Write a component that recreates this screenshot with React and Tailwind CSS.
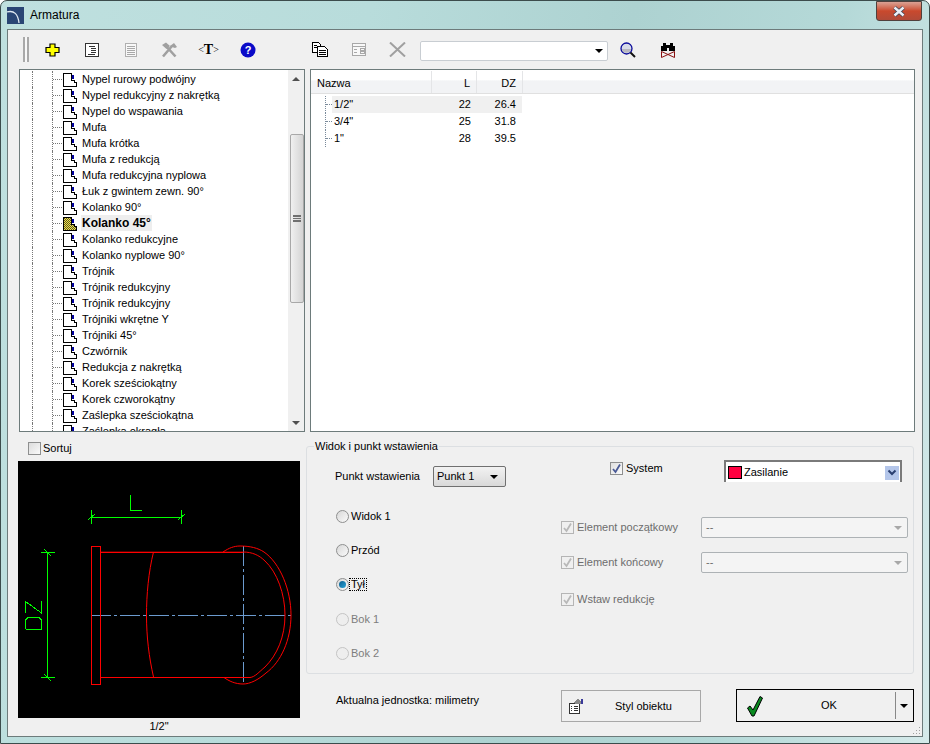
const treeItems = [
  "Nypel rurowy podwójny",
  "Nypel redukcyjny z nakrętką",
  "Nypel do wspawania",
  "Mufa",
  "Mufa krótka",
  "Mufa z redukcją",
  "Mufa redukcyjna nyplowa",
  "Łuk z gwintem zewn. 90°",
  "Kolanko 90°",
  "Kolanko 45°",
  "Kolanko redukcyjne",
  "Kolanko nyplowe 90°",
  "Trójnik",
  "Trójnik redukcyjny",
  "Trójnik redukcyjny",
  "Trójniki wkrętne Y",
  "Trójniki 45°",
  "Czwórnik",
  "Redukcja z nakrętką",
  "Korek sześciokątny",
  "Korek czworokątny",
  "Zaślepka sześciokątna",
  "Zaślepka okrągła",
];

const sizes = [
  { name: '1/2"', l: 22, dz: "26.4" },
  { name: '3/4"', l: 25, dz: "31.8" },
  { name: '1"', l: 28, dz: "39.5" },
];

function DocIcon({ active }) {
  return (
    <svg width="16" height="16" viewBox="0 0 16 16" shapeRendering="crispEdges" className="shrink-0 translate-y-[1px]">
      <defs>
        <pattern id="checker" width="2" height="2" patternUnits="userSpaceOnUse">
          <rect width="2" height="2" fill="#f4e04a" />
          <rect width="1" height="1" fill="#5a5a20" />
          <rect x="1" y="1" width="1" height="1" fill="#5a5a20" />
        </pattern>
      </defs>
      <path d="M1.5 1.5H9.5V8.5H12.5V10.5H14.5V14.5H1.5Z" fill={active ? "url(#checker)" : "#fff"} stroke="#000" />
      <rect x="10" y="3" width="2" height="4" fill="#0000a0" />
    </svg>
  );
}

function TreeRow({ label, active }) {
  return (
    <div className="flex h-4 items-center">
      <span className="ml-[12px] h-full w-[20px] shrink-0 border-l border-dotted border-[#777]" />
      <span className="h-full w-[0px] shrink-0 border-l border-dotted border-[#777]" />
      <span className="w-[9px] shrink-0 border-t border-dotted border-[#777]" />
      <DocIcon active={active} />
      {active ? (
        <span className="ml-[3px] bg-[#eeeeee] px-[1px] py-[2px] text-[12px] font-bold text-black">{label}</span>
      ) : (
        <span className="ml-[4px] text-black">{label}</span>
      )}
    </div>
  );
}

function ToolBtn({ children }) {
  return <div className="flex h-[39px] w-[39px] shrink-0 items-center justify-center">{children}</div>;
}

function Check({ disabled }) {
  return (
    <span className={`flex h-[13px] w-[13px] shrink-0 items-center justify-center border ${disabled ? "border-[#b5b5b5] bg-[#f0f0f0]" : "border-[#8e8f8f] bg-gradient-to-br from-[#e0e0e0] to-[#fafafa]"}`}>
      <svg width="11" height="11" viewBox="0 0 11 11">
        <path d="M2 6L4.5 9L9 1.5" fill="none" stroke={disabled ? "#b8b8b8" : "#4a5a96"} strokeWidth="1.8" />
      </svg>
    </span>
  );
}

function Radio({ label, checked, disabled }) {
  return (
    <div className="ml-[1px] flex h-[16px] items-center">
      <span className={`flex h-[13px] w-[13px] items-center justify-center rounded-full border ${disabled ? "border-[#c4c4c4] bg-[#eeeeee]" : "border-[#8e8f8f] bg-gradient-to-br from-[#d8d8d8] to-[#fafafa]"}`}>
        {checked && <span className="h-[7px] w-[7px] rounded-full bg-gradient-to-br from-[#0b5f8f] to-[#29a3d8]" />}
      </span>
      <span className={`ml-[1px] px-[1px] ${checked ? "outline-1 outline-dotted outline-black" : ""} ${disabled ? "text-[#7d7d7d]" : "text-black"}`}>{label}</span>
    </div>
  );
}

function DisabledCombo() {
  return (
    <div className="flex h-[21px] w-[207px] items-center justify-between rounded-[2px] border border-[#adb2b5] bg-[#f4f4f4] pl-[4px] pr-[4px] text-[#6d6d6d]">
      <span>--</span>
      <span className="mr-[1px] h-0 w-0 border-x-[4px] border-t-[4px] border-x-transparent border-t-[#a8a8a8]" />
    </div>
  );
}

function Drawing() {
  const blue = "#6c9bcf";
  return (
    <svg viewBox="18 461 282 257" className="block h-[257px] w-[282px] bg-black" shapeRendering="crispEdges">
      {/* dimensions */}
      <g stroke="#00ff00" fill="none">
        <path d="M91.5 517.5H181.5M91.5 510V524M181.5 510V524M88 520L95 514M178 520L185 514" />
        <path d="M130.5 495V510.5H142" />
        <path d="M47.5 552V677.5M41 552.5H55M41 677.5H55M44 549L51 556M44 674L51 681" />
        <path d="M25.5 613V601.5L41.5 613V601" />
        <path d="M25.5 629.5H41.5M25.5 629V620L28 617.5H39L41.5 620V629" />
      </g>
      {/* center lines */}
      <g stroke={blue} fill="none">
        <path d="M91 615.5H291" strokeDasharray="20 3 3 3" />
        <path d="M243.5 546V684" strokeDasharray="20 3 3 3" />
      </g>
      {/* fitting */}
      <g stroke="#ff0000" fill="none">
        <rect x="91.5" y="546.5" width="9" height="138" />
        <path d="M100 552H243M100 677.5H250" />
        <g shapeRendering="auto">
          <path d="M100 552.2H243" />
          <path d="M153.5 552C148.5 572 146.5 595 146.5 615C146.5 637 149 657 153.5 677" />
          <path d="M223 552C229 548 234 546 240 546C250 546 258 548 264 552C280 563 291 590 291 615C291 640 281 662 266 673C258 680 250 684 243 684C235 684 229 681 224 677.5" />
          <path d="M243 552C252 552 259 555 265 561C277 572 285 594 285 615C285 637 277 655 265 667C259 672 255 677 250 677.5" />
        </g>
      </g>
    </svg>
  );
}

export default function App() {
  return (
    <div
      className="relative flex h-[744px] w-[930px] flex-col overflow-hidden rounded-t-[7px] border border-[#3c4c4c] bg-[linear-gradient(100deg,#bfe0df_0%,#b8dcdb_35%,#add2d1_60%,#b5d9d8_80%,#d5eaea_100%)] text-[11px] leading-none text-black"
      style={{ fontFamily: '"Liberation Sans", Arial, sans-serif' }}
    >
      <div className="flex h-[28px] shrink-0 items-center">
        <div className="ml-[6px] h-[17px] w-[17px] shrink-0 bg-[#1e3a68]">
          <svg width="17" height="17" viewBox="0 0 17 17">
            <rect width="17" height="17" fill="#2a4574" />
            <path d="M0 5C7 3 11 7 12 16" fill="none" stroke="#dfe7f0" strokeWidth="1.3" />
          </svg>
        </div>
        <span className="ml-[6px] text-[12px] text-black">Armatura</span>
        <div className="ml-auto mr-[7px] flex h-[20px] w-[46px] -translate-y-[4px] items-center justify-center rounded-b-[3px] border border-[#50403c] bg-gradient-to-b from-[#d9a294] via-[#c9492d] to-[#b04a38]">
          <svg width="14" height="11" viewBox="0 0 14 11">
            <path d="M2.5 1.5L11.5 9.5M11.5 1.5L2.5 9.5" stroke="#3c4658" strokeWidth="4" />
            <path d="M2.5 1.5L11.5 9.5M11.5 1.5L2.5 9.5" stroke="#ecf0f6" strokeWidth="2.4" />
          </svg>
        </div>
      </div>

      <div className="mx-[6px] flex h-[709px] flex-col border border-[#6d7b7b] bg-[#f0f0f0]">
        {/* toolbar */}
        <div className="flex h-[39px] shrink-0 items-center">
          <span className="ml-[15px] h-[25px] w-[6px] border-x-2 border-[#a9a9a9] bg-[#f8f8f8]" />
          <div className="ml-[4px] flex">
            <ToolBtn>
              <svg width="15" height="14" viewBox="0 0 15 14">
                <path d="M5 1H10V4.5H14V9.5H10V13H5V9.5H1V4.5H5Z" fill="#ffff00" stroke="#000" strokeWidth="1.2" />
              </svg>
            </ToolBtn>
            <ToolBtn>
              <svg width="14" height="14" viewBox="0 0 14 14" shapeRendering="crispEdges">
                <rect x="0.5" y="0.5" width="13" height="13" fill="#fff" stroke="#333" />
                <path d="M4 3.5H10M6 5.5H11M6 7.5H11M6 9.5H11M3 11.5H10" stroke="#333" />
              </svg>
            </ToolBtn>
            <ToolBtn>
              <svg width="12" height="14" viewBox="0 0 12 14" shapeRendering="crispEdges">
                <rect x="0.5" y="0.5" width="11" height="13" fill="#f8f8f8" stroke="#b0b0b0" />
                <path d="M2 3.5H10M2 5.5H10M2 7.5H10M2 9.5H10M2 11.5H10" stroke="#a8a8a8" />
              </svg>
            </ToolBtn>
            <ToolBtn>
              <svg width="17" height="16" viewBox="0 0 17 16">
                <path d="M2 14.5L11 4M14.5 14.5L5 4" stroke="#a0a0a0" strokeWidth="2.6" />
                <path d="M1 3L5 0.5L9 4L5.5 7ZM9 4L13 1L16 5L14 6L11 5Z" fill="#a0a0a0" />
              </svg>
            </ToolBtn>
            <ToolBtn>
              <span className="flex items-center text-black" style={{ fontFamily: '"Liberation Serif", serif' }}>
                <span className="text-[10px]">&lt;</span>
                <span className="text-[14px] font-bold">T</span>
                <span className="text-[10px]">&gt;</span>
              </span>
            </ToolBtn>
            <ToolBtn>
              <svg width="16" height="16" viewBox="0 0 16 16">
                <circle cx="8" cy="8" r="7.5" fill="#0a0ac8" />
                <text x="8" y="12" textAnchor="middle" fontSize="11" fontWeight="700" fill="#fff" fontFamily="Liberation Sans">?</text>
              </svg>
            </ToolBtn>
          </div>
          <div className="ml-[33px] flex">
            <ToolBtn>
              <svg width="16" height="15" viewBox="0 0 16 15" shapeRendering="crispEdges">
                <path d="M0.5 0.5H6.5L8.5 2.5V10.5H0.5Z" fill="#fff" stroke="#000" />
                <path d="M5.5 4.5H12.5L15.5 7.5V14.5H5.5Z" fill="#fff" stroke="#000" />
                <path d="M7 8.5H14M7 10.5H14M7 12.5H14M2 3.5H5M2 5.5H5" stroke="#000" />
              </svg>
            </ToolBtn>
            <ToolBtn>
              <svg width="14" height="13" viewBox="0 0 14 13" shapeRendering="crispEdges">
                <rect x="0.5" y="0.5" width="13" height="12" fill="#f8f8f8" stroke="#a8a8a8" />
                <path d="M1 3.5H13M2 6.5H5M2 9.5H5M8 5.5H12V7.5H8ZM8 8.5H12V10.5H8Z" fill="none" stroke="#a8a8a8" />
              </svg>
            </ToolBtn>
            <ToolBtn>
              <svg width="17" height="15" viewBox="0 0 17 15">
                <path d="M1 0.5L16 14.5M16 0.5L1 14.5" stroke="#a0a0a0" strokeWidth="2" />
              </svg>
            </ToolBtn>
          </div>
          <div className="ml-[3px] mt-[2px] flex h-[20px] w-[188px] items-center justify-end rounded-[2px] border border-[#c8cdd2] bg-white pr-[4px]">
            <span className="h-0 w-0 border-x-[4px] border-t-[4px] border-x-transparent border-t-black" />
          </div>
          <div className="ml-[12px] flex w-[16px] justify-center">
            <svg width="16" height="16" viewBox="0 0 16 16">
              <circle cx="6.5" cy="6.5" r="5.5" fill="#d8dce8" stroke="#0a0a9a" strokeWidth="1.3" />
              <path d="M2 7H11V8.5C9 11.5 4 11.5 2 8.5Z" fill="#b8b8c0" />
              <path d="M10.5 10.5L15 15" stroke="#111" strokeWidth="2" />
            </svg>
          </div>
          <div className="ml-[24px] flex w-[16px] justify-center">
            <svg width="16" height="16" viewBox="0 0 16 16" shapeRendering="crispEdges">
              <path d="M3 1H6V3H10V1H13V4H15V9H9V6H7V9H1V4H3Z" fill="#000" />
              <path d="M1.5 9.5L14.5 15.5M14.5 9.5L1.5 15.5M1.5 9.5V15.5M14.5 9.5V15.5" fill="none" stroke="#8a1010" shapeRendering="auto" />
            </svg>
          </div>
        </div>

        {/* tree and list */}
        <div className="flex h-[363px] shrink-0">
          <div className="ml-[11px] flex w-[286px] shrink-0 border border-[#6d7b7b] bg-white">
            <div className="h-full flex-1 overflow-hidden pt-[1px]">
              {treeItems.map((item, i) => (
                <TreeRow key={i} label={item} active={item === "Kolanko 45°"} />
              ))}
            </div>
            <div className="flex w-[16px] shrink-0 flex-col items-center bg-[#f0f0f0]">
              <div className="flex h-[17px] w-full items-center justify-center">
                <span className="h-0 w-0 border-x-[4px] border-b-[4px] border-x-transparent border-b-[#505050]" />
              </div>
              <div className="mt-[47px] ml-[1px] flex h-[169px] w-[14px] items-center justify-center rounded-[2px] border border-[#a8a8a8] bg-gradient-to-r from-[#f0f0f0] to-[#d4d4d4]">
                <span className="h-[7px] w-[8px] border-y border-[#707070] bg-[linear-gradient(#707070_1px,transparent_1px)] bg-[length:100%_2px]" />
              </div>
              <div className="mt-auto flex h-[17px] w-full items-center justify-center">
                <span className="h-0 w-0 border-x-[4px] border-t-[4px] border-x-transparent border-t-[#505050]" />
              </div>
            </div>
          </div>

          <div className="ml-[5px] w-[605px] shrink-0 border border-[#6d7b7b] bg-white pt-[1px]">
            <div className="flex h-[23px] border-b border-[#e0e0e0] bg-[linear-gradient(#ffffff_40%,#f2f3f5_45%)] pl-[1px]">
              <div className="flex w-[120px] items-center border-r border-[#e4e5e7] pl-[5px] pt-[2px]">Nazwa</div>
              <div className="flex w-[45px] items-center justify-end border-r border-[#e4e5e7] pr-[6px] pt-[2px]">L</div>
              <div className="flex w-[46px] items-center justify-end border-r border-[#e4e5e7] pr-[6px] pt-[2px]">DZ</div>
            </div>
            <div className="pt-[2px]">
              {sizes.map((s, i) => (
                <div key={s.name} className="flex h-[17px] items-center">
                  <span className={`ml-[14px] h-full w-[1px] shrink-0 border-l border-dotted border-[#7a8a9a] ${i === 2 ? "h-1/2 self-start" : ""}`} />
                  <span className="w-[6px] shrink-0 border-t border-dotted border-[#7a8a9a]" />
                  <div className={`flex h-full w-[190px] items-center ${i === 0 ? "bg-[#f0f0f0]" : ""}`}>
                    <span className="w-[98px] pl-[2px]">{s.name}</span>
                    <span className="w-[45px] pr-[4px] text-right">{s.l}</span>
                    <span className="w-[47px] pr-[6px] text-right">{s.dz}</span>
                  </div>
                </div>
              ))}
            </div>
          </div>
        </div>

        {/* lower part */}
        <div className="flex min-h-0 flex-1">
          <div className="ml-[10px] flex w-[282px] shrink-0 flex-col">
            <div className="ml-[10px] mt-[10px] flex h-[13px] items-center">
              <span className="h-[13px] w-[13px] border border-[#8e8f8f] bg-gradient-to-br from-[#dcdcdc] to-[#fafafa]" />
              <span className="ml-[1px] pl-[1px]">Sortuj</span>
            </div>
            <div className="mt-[6px]">
              <Drawing />
            </div>
            <div className="mt-[3px] text-center">1/2"</div>
          </div>

          <div className="ml-[6px] flex w-[608px] shrink-0 flex-col">
            <div className="relative mt-[14px] flex h-[228px] rounded-[3px] border border-[#dcdfe2]">
              <span className="absolute -top-[6px] left-[7px] bg-[#f0f0f0] px-[1px]">Widok i punkt wstawienia</span>
              <div className="w-[254px] shrink-0 pl-[28px]">
                <div className="mt-[19px] flex items-center">
                  <span className="w-[98px]">Punkt wstawienia</span>
                  <div className="flex h-[21px] w-[73px] items-center justify-between rounded-[2px] border border-[#707070] bg-gradient-to-b from-[#f2f2f2] to-[#d9d9d9] pl-[3px] pr-[7px]">
                    <span>Punkt 1</span>
                    <span className="h-0 w-0 border-x-[4px] border-t-[4px] border-x-transparent border-t-black" />
                  </div>
                </div>
                <div className="mt-[21px] flex flex-col gap-[18px]">
                  <Radio label="Widok 1" />
                  <Radio label="Przód" />
                  <Radio label="Tył" checked />
                  <div className="mt-[1px]">
                    <Radio label="Bok 1" disabled />
                  </div>
                  <Radio label="Bok 2" disabled />
                </div>
              </div>
              <div className="flex-1">
                <div className="mt-[15px] flex items-start">
                  <div className="ml-[49px] flex w-[114px] items-center">
                    <Check />
                    <span className="ml-[2px] pl-[1px]">System</span>
                  </div>
                  <div className="-mt-[2px] flex h-[22px] w-[178px] items-center border-2 border-b-0 border-[#7a7a7a] bg-white pl-[2px] pr-[1px] pt-[1px]">
                    <span className="h-[13px] w-[14px] border border-black bg-[#ff0040]" />
                    <span className="ml-[2px]">Zasilanie</span>
                    <span className="ml-auto flex h-[14px] w-[14px] items-center justify-center bg-[#b4c6ea]">
                      <svg width="10" height="8" viewBox="0 0 10 8">
                        <path d="M1.5 1.5L5 5L8.5 1.5" fill="none" stroke="#2a3f70" strokeWidth="2" />
                      </svg>
                    </span>
                  </div>
                </div>
                <div className="mt-[35px] flex items-center">
                  <Check disabled />
                  <span className="ml-[2px] w-[125px] pl-[1px] text-[#6d6d6d]">Element początkowy</span>
                  <DisabledCombo />
                </div>
                <div className="mt-[14px] flex items-center">
                  <Check disabled />
                  <span className="ml-[2px] w-[125px] pl-[1px] text-[#6d6d6d]">Element końcowy</span>
                  <DisabledCombo />
                </div>
                <div className="mt-[20px] flex items-center">
                  <Check disabled />
                  <span className="ml-[2px] pl-[1px] text-[#6d6d6d]">Wstaw redukcję</span>
                </div>
              </div>
            </div>

            <div className="flex flex-1 items-start">
              <span className="ml-[30px] mt-[21px] w-[225px]">Aktualna jednostka: milimetry</span>
              <div className="mt-[16px] flex h-[32px] w-[140px] items-center border border-[#a8a8a8] bg-[#f0f0f0] pl-[6px]">
                <svg width="16" height="16" viewBox="0 0 16 16" shapeRendering="crispEdges">
                  <path d="M1.5 5.5H11.5V15.5H1.5Z" fill="#fff" stroke="#333" />
                  <path d="M3 8.5H4M6 8.5H10M3 10.5H4M6 10.5H10M3 12.5H4M6 12.5H10" stroke="#333" />
                  <path d="M5 5L10 1L15 4L13 6H9Z" fill="#8a8a8a" />
                  <rect x="13" y="1" width="2" height="5" fill="#3a3a9a" />
                </svg>
                <span className="ml-[31px]">Styl obiektu</span>
              </div>
              <div className="ml-[35px] mt-[15px] flex h-[33px] w-[178px] items-center border border-black bg-[#f0f0f0]">
                <svg className="ml-[9px]" width="18" height="22" viewBox="0 0 18 22">
                  <path d="M1.5 13L4 11L7 15L14 1.5L16.5 3L8 21H6Z" fill="#0a8a20" stroke="#000" strokeWidth="1" />
                </svg>
                <span className="ml-[57px] w-[74px]">OK</span>
                <span className="h-[27px] w-[1px] bg-[#888]" />
                <span className="ml-[4px] h-0 w-0 border-x-[4px] border-t-[4px] border-x-transparent border-t-black" />
              </div>
            </div>
          </div>
        </div>
      </div>
      <div className="h-[6px] shrink-0" />
      {/* resize grip */}
      <svg className="absolute bottom-[8px] right-[8px]" width="9" height="9" viewBox="0 0 9 9" shapeRendering="crispEdges">
        <path d="M7 1h1v1h-1zM4 4h1v1h-1zM7 4h1v1h-1zM1 7h1v1h-1zM4 7h1v1h-1zM7 7h1v1h-1z" fill="#a0a0a0" />
      </svg>
    </div>
  );
}
